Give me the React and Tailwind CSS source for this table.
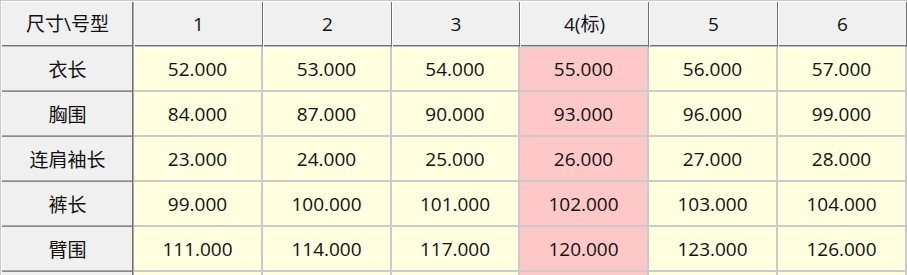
import React from "react";

const cols = ["1", "2", "3", "4(标)", "5", "6"];
const widths = ["w-[129px]", "w-[129px]", "w-[128px]", "w-[129px]", "w-[129px]", "w-[129px]"];
const rows = [
  ["衣长", ["52.000", "53.000", "54.000", "55.000", "56.000", "57.000"]],
  ["胸围", ["84.000", "87.000", "90.000", "93.000", "96.000", "99.000"]],
  ["连肩袖长", ["23.000", "24.000", "25.000", "26.000", "27.000", "28.000"]],
  ["裤长", ["99.000", "100.000", "101.000", "102.000", "103.000", "104.000"]],
  ["臂围", ["111.000", "114.000", "117.000", "120.000", "123.000", "126.000"]],
  ["", ["", "", "", "", "", ""]],
];

const font = { fontFamily: '"Open Sans", "Noto Sans CJK SC", sans-serif' };

export default function App() {
  return (
    <div
      className="w-[907px] h-[275px] overflow-hidden bg-white text-[19px] text-[#111] leading-none"
      style={font}
    >
      <div className="flex flex-col border-t border-l border-[#c9c9c9]">
        {/* header */}
        <div className="flex h-[46px]">
          <div className="w-[133px] h-full flex items-center justify-center bg-[#f0f0f0] shadow-[inset_1px_1px_0_#fff,inset_-1px_0_0_#a8a8a8,inset_-2px_0_0_#707070,inset_0_-1px_0_#c0c0c0,inset_0_-2px_0_#707070]">
            尺寸\号型
          </div>
          {cols.map((c, i) => (
            <div
              key={c}
              className={`${widths[i]} h-full flex items-center justify-center bg-[#f0f0f0] shadow-[inset_1px_1px_0_#fff,inset_-1px_0_0_#707070,inset_0_-1px_0_#c0c0c0,inset_0_-2px_0_#707070]`}
            >
              {c}
            </div>
          ))}
        </div>
        {rows.map(([name, vals], r) => (
          <div key={r} className="flex h-[45px]">
            <div className="w-[133px] h-full flex items-center justify-center pt-[1px] bg-[#f0f0f0] shadow-[inset_1px_0_0_#fff,inset_-1px_0_0_#a8a8a8,inset_-2px_0_0_#707070,inset_0_-1px_0_#8a8a8a,inset_0_-2px_0_#a8a8a8]">
              {name}
            </div>
            {vals.map((v, i) => (
              <div
                key={i}
                className={`${widths[i]} h-full flex items-center justify-center pt-[1px] border-r-2 border-b-2 border-[#cbcbcb] ${
                  i === 3 ? "bg-[#ffc8c8]" : "bg-[#ffffe0]"
                }`}
              >
                {v}
              </div>
            ))}
          </div>
        ))}
      </div>
    </div>
  );
}
